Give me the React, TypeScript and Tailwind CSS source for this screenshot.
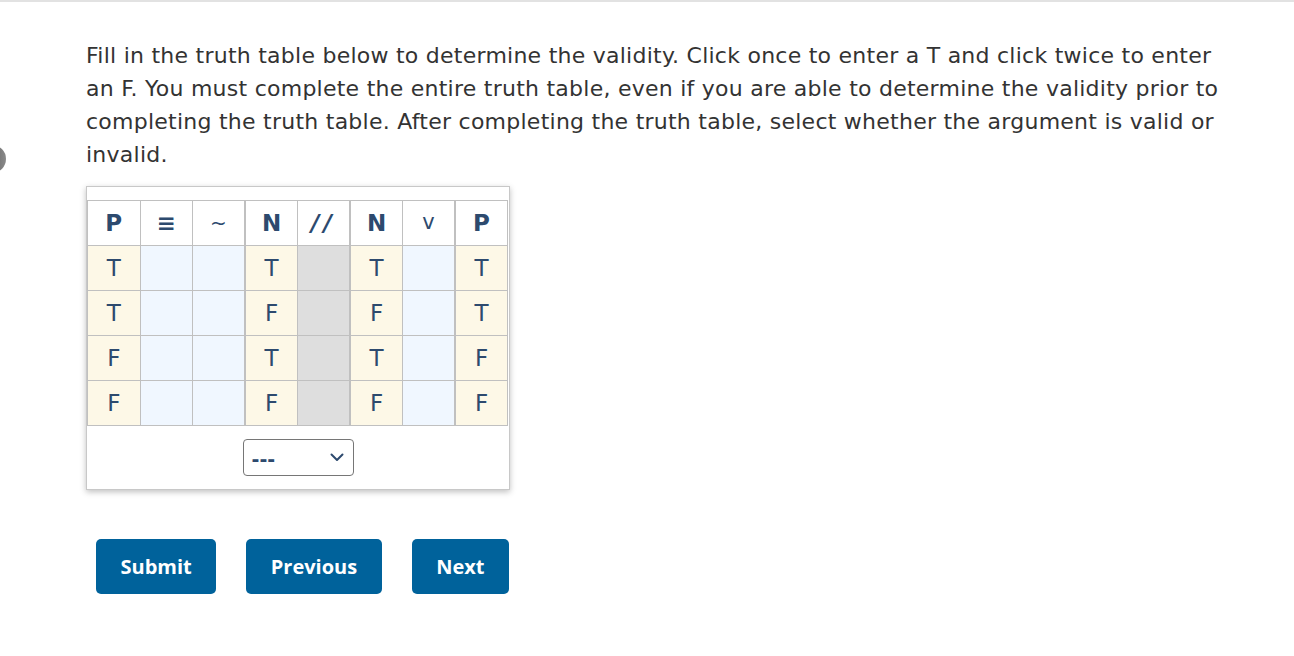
const rows = [
  ["T", "T", "T", "T"],
  ["T", "F", "F", "T"],
  ["F", "T", "T", "F"],
  ["F", "F", "F", "F"],
];

const headers = [
  { label: "P", cls: "font-bold text-[23px]" },
  { label: "≡", cls: "font-bold text-[23px]" },
  { label: "~", cls: "font-normal text-[20px]" },
  { label: "N", cls: "font-bold text-[23px]" },
  { label: "//", cls: "font-bold italic text-[23px] tracking-[4px]" },
  { label: "N", cls: "font-bold text-[23px]" },
  { label: "v", cls: "font-normal text-[21px]" },
  { label: "P", cls: "font-bold text-[23px]" },
];

// thicker line before these columns
const groupStart = [3, 5, 7];

const cellBorder = (i: number) =>
  `border border-[#c0c0c0] ${groupStart.includes(i) ? "border-l-2" : ""}`;

const Given = ({ v, i }: { v: string; i: number }) => (
  <td className={`${cellBorder(i)} h-[45px] bg-[#fdf8e7] text-center text-[23px] text-[#2d4a6e]`}>
    {v}
  </td>
);

const Empty = ({ i, gray }: { i: number; gray?: boolean }) => (
  <td className={`${cellBorder(i)} h-[45px] ${gray ? "bg-[#dedede]" : "bg-[#f0f7ff]"}`} />
);

export default function App() {
  return (
    <div className="relative min-h-screen overflow-hidden border-t-2 border-[#e2e2e2] bg-white">
      <div className="absolute left-[-22px] top-[143px] h-[28px] w-[28px] rounded-full bg-gradient-to-r from-[#4a4a4a] to-[#8a8a8a]" />

      <div className="pl-[86px] pt-[37px]" style={{ fontFamily: '"DejaVu Sans", Verdana, sans-serif' }}>
        <p className="w-[1150px] text-[22px] leading-[33px] tracking-[0.25px] text-[#333333]">
          Fill in the truth table below to determine the validity. Click once to enter a T and click twice to enter
          an F. You must complete the entire truth table, even if you are able to determine the validity prior to
          completing the truth table. After completing the truth table, select whether the argument is valid or
          invalid.
        </p>

        <div className="mt-[15px] w-[424px] border border-[#c8c8c8] pb-[13px] pt-[13px] shadow-[0_2px_6px_rgba(0,0,0,0.25)]">
          <table className="w-[421px] table-fixed border-collapse">
            <thead>
              <tr>
                {headers.map((h, i) => (
                  <th key={i} className={`${cellBorder(i)} h-[45px] bg-white text-center text-[#2d4a6e] ${h.cls}`}>
                    {h.label}
                  </th>
                ))}
              </tr>
            </thead>
            <tbody>
              {rows.map((r, k) => (
                <tr key={k}>
                  <Given v={r[0]} i={0} />
                  <Empty i={1} />
                  <Empty i={2} />
                  <Given v={r[1]} i={3} />
                  <Empty i={4} gray />
                  <Given v={r[2]} i={5} />
                  <Empty i={6} />
                  <Given v={r[3]} i={7} />
                </tr>
              ))}
            </tbody>
          </table>

          <div className="mt-[13px] flex justify-center">
            <div className="flex h-[37px] w-[111px] items-center justify-between rounded-[4px] border border-[#767676] pl-[8px] pr-[9px] text-[#2d4a6e]">
              <span className="pt-[4px] text-[19px] font-bold leading-none">---</span>
              <svg width="14" height="9" viewBox="0 0 14 9" fill="none">
                <path d="M1.5 1.5 7 7l5.5-5.5" stroke="#2d4a6e" strokeWidth="2" strokeLinecap="round" strokeLinejoin="round" />
              </svg>
            </div>
          </div>
        </div>

        <div className="ml-[10px] mt-[49px] flex gap-[30px]" style={{ fontFamily: '"Open Sans", sans-serif' }}>
          {["Submit", "Previous", "Next"].map((b) => (
            <button
              key={b}
              type="button"
              className="h-[55px] rounded-[5px] bg-[#00629b] px-[24.5px] text-[20px] font-bold text-white"
            >
              {b}
            </button>
          ))}
        </div>
      </div>
    </div>
  );
}
